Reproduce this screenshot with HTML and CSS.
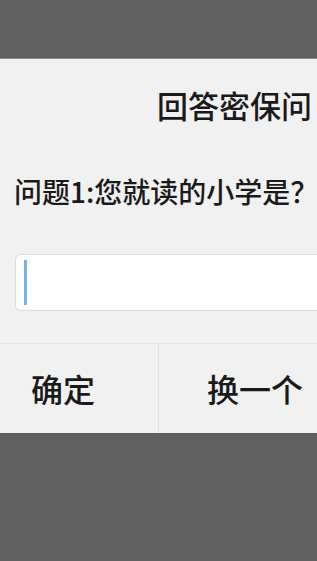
FILE: index.html
```html
<!DOCTYPE html>
<html lang="zh-CN">
<head>
<meta charset="utf-8">
<title>回答密保问</title>
<link rel="stylesheet" href="styles.css">
</head>
<body>
<div class="dialog">
  <div class="title">回答密保问</div>
  <div class="question">问题1:您就读的小学是？</div>
  <div class="field"><span class="caret"></span></div>
  <div class="actions">
    <div class="btn btn-ok">确定</div>
    <div class="btn btn-change">换一个</div>
  </div>
</div>
</body>
</html>
```
FILE: styles.css
```css
html, body {
  margin: 0;
  padding: 0;
}
body {
  width: 317px;
  height: 561px;
  overflow: hidden;
  background: #5f5f5f;
  font-family: "Noto Sans CJK SC", "Noto Sans", sans-serif;
  font-weight: 500;
  color: #1a1a1a;
}
.dialog {
  margin-top: 58px;
  background: #f1f1f1;
  border-top: 1px solid #8c8c8c;
  display: flex;
  flex-direction: column;
}
.title {
  font-size: 31px;
  line-height: 40px;
  padding: 26px 0 0 157px;
  height: 40px;
  white-space: nowrap;
}
.question {
  font-size: 28px;
  line-height: 40px;
  padding: 46px 0 0 14px;
  height: 40px;
  white-space: nowrap;
}
.field {
  margin: 43px 0 0 15px;
  height: 55px;
  background: #ffffff;
  border: 1px solid #dcdcdc;
  border-right: none;
  border-radius: 6px 0 0 6px;
  display: flex;
  align-items: center;
  padding-left: 8px;
}
.caret {
  display: block;
  width: 3px;
  height: 45px;
  background: #72b4e4;
}
.actions {
  margin-top: 32px;
  border-top: 1px solid #e2e2e2;
  display: flex;
  height: 89px;
}
.btn {
  font-size: 32px;
  line-height: 89px;
  white-space: nowrap;
}
.btn-ok {
  width: 158px;
  padding-left: 31px;
  box-sizing: border-box;
}
.btn-change {
  flex: 1;
  border-left: 1px solid #e2e2e2;
  padding-left: 48px;
}
```
